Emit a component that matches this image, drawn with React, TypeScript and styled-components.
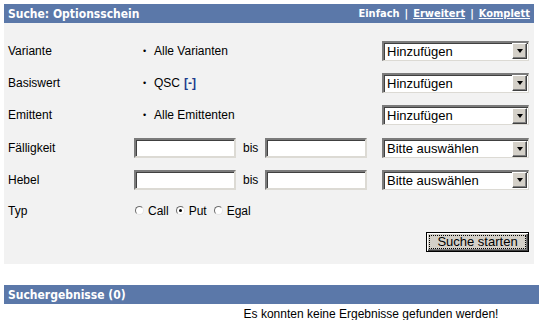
import React from 'react';
import styled, { createGlobalStyle } from 'styled-components';

const GlobalStyle = createGlobalStyle`
  body {
    margin: 4px;
    background: #ffffff;
    font-family: "Liberation Sans", Arial, sans-serif;
    font-size: 12px;
    color: #000;
    overflow: hidden;
  }
`;

const Panel = styled.div`
  width: 530px;
  background: #f2f2f2;
`;

const TitleBar = styled.div`
  display: flex;
  align-items: center;
  justify-content: space-between;
  height: 19px;
  padding: 0 4px 0 4px;
  background: #5b78a9;
  color: #fff;
`;

const Title = styled.span`
  font-family: "DejaVu Sans Condensed", "DejaVu Sans", sans-serif;
  font-weight: bold;
  font-size: 12px;
`;

const Modes = styled.div`
  display: flex;
  align-items: center;
  gap: 5px;
  font-family: "DejaVu Sans Condensed", "DejaVu Sans", sans-serif;
  font-weight: bold;
  font-size: 11px;
`;

const ModeLink = styled.a<{ active?: boolean }>`
  color: #fff;
  text-decoration: ${p => (p.active ? 'none' : 'underline')};
  cursor: pointer;
`;

const FormGrid = styled.div`
  display: grid;
  grid-template-columns: 126px 248px 147px;
  grid-template-rows: 33px 31px 34px 32px 31px 31px;
  align-items: center;
  padding: 11px 5px 0 4px;
`;

const Label = styled.div``;

const Value = styled.div`
  display: flex;
  align-items: center;
  padding-left: 9px;
`;

const Bullet = styled.span`
  width: 11px;
  font-size: 9px;
`;

const Toggle = styled.a`
  margin-left: 4px;
  color: #1d3b8c;
  font-weight: bold;
  cursor: pointer;
`;

const RangeCell = styled.div`
  display: flex;
  align-items: center;
`;

const TextBox = styled.div`
  box-sizing: border-box;
  width: 102px;
  height: 20px;
  background: #fff;
  border-style: solid;
  border-width: 2px;
  border-color: #7b7b7b #dcdad4 #dcdad4 #7b7b7b;
  box-shadow: inset 1px 1px 0 #404040;
`;

const Bis = styled.span`
  margin: 0 7px 0 7px;
`;

const SelectBox = styled.div`
  box-sizing: border-box;
  display: flex;
  align-items: center;
  justify-content: space-between;
  width: 147px;
  height: 20px;
  background: #fff;
  border-style: solid;
  border-width: 2px 1px 1px 2px;
  border-color: #7b7b7b #dcdad4 #dcdad4 #7b7b7b;
  box-shadow: inset 1px 1px 0 #404040;
  padding-left: 3px;
  font-size: 13px;
`;

const DropButton = styled.span`
  box-sizing: border-box;
  display: flex;
  align-items: center;
  justify-content: center;
  width: 15px;
  height: 16px;
  margin-right: 1px;
  background: #d4d0c8;
  border: 1px solid;
  border-color: #fff #404040 #404040 #fff;
  box-shadow: inset -1px -1px 0 #808080;
`;

const Arrow = styled.span`
  width: 0;
  height: 0;
  border-left: 3.5px solid transparent;
  border-right: 3.5px solid transparent;
  border-top: 4px solid #000;
`;

const RadioGroup = styled.div`
  display: flex;
  align-items: center;
  padding-left: 1px;
`;

const RadioOption = styled.label`
  display: flex;
  align-items: center;
  gap: 4px;
  margin-right: 7px;
`;

const RadioDot = styled.span<{ checked?: boolean }>`
  position: relative;
  box-sizing: border-box;
  width: 9px;
  height: 9px;
  border-radius: 50%;
  background: #fff;
  border: 1px solid;
  border-color: #6d6d6d #e6e6e6 #e6e6e6 #6d6d6d;
  &::after {
    content: '';
    display: ${p => (p.checked ? 'block' : 'none')};
    position: absolute;
    left: 2px;
    top: 2px;
    width: 3px;
    height: 3px;
    border-radius: 50%;
    background: #000;
  }
`;

const ButtonRow = styled.div`
  display: flex;
  justify-content: flex-end;
  padding: 6px 5px 12px 0;
`;

const SubmitButton = styled.button`
  box-sizing: border-box;
  width: 103px;
  height: 20px;
  padding: 0;
  font-family: "Liberation Sans", Arial, sans-serif;
  font-size: 13px;
  line-height: 16px;
  color: #000;
  background: #d4d0c8;
  border: 1px solid #000;
  box-shadow: inset 1px 1px 0 #fff, inset -1px -1px 0 #404040, inset -2px -2px 0 #808080;
  outline: 1px dotted #000;
  outline-offset: -4px;
`;

const Results = styled.div`
  margin-top: 21px;
  width: 539px;
  overflow: hidden;
`;

const ResultsTable = styled.div`
  width: 734px;
`;

const Message = styled.div`
  text-align: center;
  padding-top: 3px;
`;

const rows = [
  { label: 'Variante', value: 'Alle Varianten', select: 'Hinzufügen' },
  { label: 'Basiswert', value: 'QSC', select: 'Hinzufügen', toggle: true },
  { label: 'Emittent', value: 'Alle Emittenten', select: 'Hinzufügen' },
];

const ranges = ['Fälligkeit', 'Hebel'];

const Select: React.FC<{ text: string }> = ({ text }) => (
  <SelectBox>
    <span>{text}</span>
    <DropButton>
      <Arrow />
    </DropButton>
  </SelectBox>
);

export default function App() {
  return (
    <>
      <GlobalStyle />
      <Panel>
        <TitleBar>
          <Title>Suche: Optionsschein</Title>
          <Modes>
            <ModeLink active>Einfach</ModeLink>
            <span>|</span>
            <ModeLink>Erweitert</ModeLink>
            <span>|</span>
            <ModeLink>Komplett</ModeLink>
          </Modes>
        </TitleBar>
        <FormGrid>
          {rows.map(r => (
            <React.Fragment key={r.label}>
              <Label>{r.label}</Label>
              <Value>
                <Bullet>•</Bullet>
                {r.value}
                {r.toggle && <Toggle>[-]</Toggle>}
              </Value>
              <Select text={r.select} />
            </React.Fragment>
          ))}
          {ranges.map(label => (
            <React.Fragment key={label}>
              <Label>{label}</Label>
              <RangeCell>
                <TextBox />
                <Bis>bis</Bis>
                <TextBox />
              </RangeCell>
              <Select text="Bitte auswählen" />
            </React.Fragment>
          ))}
          <Label>Typ</Label>
          <RadioGroup>
            <RadioOption><RadioDot />Call</RadioOption>
            <RadioOption><RadioDot checked />Put</RadioOption>
            <RadioOption><RadioDot />Egal</RadioOption>
          </RadioGroup>
          <span />
        </FormGrid>
        <ButtonRow>
          <SubmitButton>Suche starten</SubmitButton>
        </ButtonRow>
      </Panel>
      <Results>
        <ResultsTable>
          <TitleBar>
            <Title>Suchergebnisse (0)</Title>
          </TitleBar>
          <Message>Es konnten keine Ergebnisse gefunden werden!</Message>
        </ResultsTable>
      </Results>
    </>
  );
}
